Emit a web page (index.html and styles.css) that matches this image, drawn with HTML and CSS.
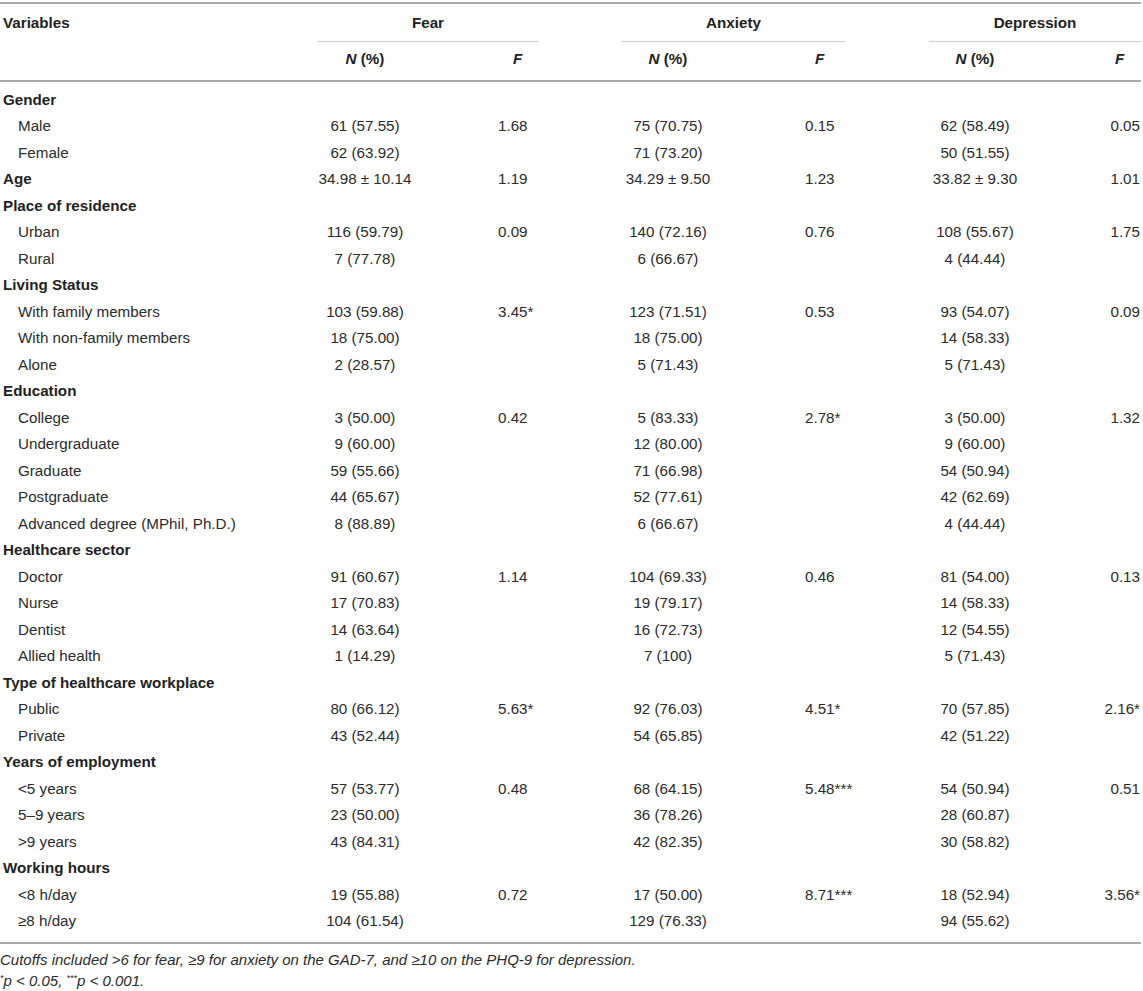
FILE: index.html
```html
<!DOCTYPE html>
<html lang="en">
<head>
<meta charset="utf-8">
<title>Table</title>
<link rel="stylesheet" href="styles.css">
</head>
<body>
<div class="wrap">
<table class="tbl">
  <colgroup>
    <col class="w-var">
    <col class="w-n1">
    <col class="w-f1">
    <col class="w-sp">
    <col class="w-n2">
    <col class="w-f2">
    <col class="w-sp">
    <col class="w-n3">
    <col class="w-f3">
  </colgroup>
  <thead>
    <tr class="h1">
      <th class="var">Variables</th>
      <th class="grp" colspan="2">Fear</th>
      <th class="sp"></th>
      <th class="grp" colspan="2">Anxiety</th>
      <th class="sp"></th>
      <th class="grp" colspan="2">Depression</th>
    </tr>
    <tr class="h2">
      <th class="var"></th>
      <th class="n"><i>N</i> (%)</th>
      <th class="f f1"><i>F</i></th>
      <th class="sp"></th>
      <th class="n"><i>N</i> (%)</th>
      <th class="f f2"><i>F</i></th>
      <th class="sp"></th>
      <th class="n"><i>N</i> (%)</th>
      <th class="f f3"><i>F</i></th>
    </tr>
  </thead>
  <tbody>
    <tr class="first"><td class="cat">Gender</td><td></td><td></td><td></td><td></td><td></td><td></td><td></td><td></td></tr>
    <tr><td class="sub">Male</td><td class="n">61 (57.55)</td><td class="f1">1.68</td><td></td><td class="n">75 (70.75)</td><td class="f2">0.15</td><td></td><td class="n">62 (58.49)</td><td class="f3">0.05</td></tr>
    <tr><td class="sub">Female</td><td class="n">62 (63.92)</td><td class="f1"></td><td></td><td class="n">71 (73.20)</td><td class="f2"></td><td></td><td class="n">50 (51.55)</td><td class="f3"></td></tr>
    <tr><td class="cat">Age</td><td class="n">34.98 ± 10.14</td><td class="f1">1.19</td><td></td><td class="n">34.29 ± 9.50</td><td class="f2">1.23</td><td></td><td class="n">33.82 ± 9.30</td><td class="f3">1.01</td></tr>
    <tr><td class="cat">Place of residence</td><td></td><td></td><td></td><td></td><td></td><td></td><td></td><td></td></tr>
    <tr><td class="sub">Urban</td><td class="n">116 (59.79)</td><td class="f1">0.09</td><td></td><td class="n">140 (72.16)</td><td class="f2">0.76</td><td></td><td class="n">108 (55.67)</td><td class="f3">1.75</td></tr>
    <tr><td class="sub">Rural</td><td class="n">7 (77.78)</td><td class="f1"></td><td></td><td class="n">6 (66.67)</td><td class="f2"></td><td></td><td class="n">4 (44.44)</td><td class="f3"></td></tr>
    <tr><td class="cat">Living Status</td><td></td><td></td><td></td><td></td><td></td><td></td><td></td><td></td></tr>
    <tr><td class="sub">With family members</td><td class="n">103 (59.88)</td><td class="f1">3.45*</td><td></td><td class="n">123 (71.51)</td><td class="f2">0.53</td><td></td><td class="n">93 (54.07)</td><td class="f3">0.09</td></tr>
    <tr><td class="sub">With non-family members</td><td class="n">18 (75.00)</td><td class="f1"></td><td></td><td class="n">18 (75.00)</td><td class="f2"></td><td></td><td class="n">14 (58.33)</td><td class="f3"></td></tr>
    <tr><td class="sub">Alone</td><td class="n">2 (28.57)</td><td class="f1"></td><td></td><td class="n">5 (71.43)</td><td class="f2"></td><td></td><td class="n">5 (71.43)</td><td class="f3"></td></tr>
    <tr><td class="cat">Education</td><td></td><td></td><td></td><td></td><td></td><td></td><td></td><td></td></tr>
    <tr><td class="sub">College</td><td class="n">3 (50.00)</td><td class="f1">0.42</td><td></td><td class="n">5 (83.33)</td><td class="f2">2.78*</td><td></td><td class="n">3 (50.00)</td><td class="f3">1.32</td></tr>
    <tr><td class="sub">Undergraduate</td><td class="n">9 (60.00)</td><td class="f1"></td><td></td><td class="n">12 (80.00)</td><td class="f2"></td><td></td><td class="n">9 (60.00)</td><td class="f3"></td></tr>
    <tr><td class="sub">Graduate</td><td class="n">59 (55.66)</td><td class="f1"></td><td></td><td class="n">71 (66.98)</td><td class="f2"></td><td></td><td class="n">54 (50.94)</td><td class="f3"></td></tr>
    <tr><td class="sub">Postgraduate</td><td class="n">44 (65.67)</td><td class="f1"></td><td></td><td class="n">52 (77.61)</td><td class="f2"></td><td></td><td class="n">42 (62.69)</td><td class="f3"></td></tr>
    <tr><td class="sub">Advanced degree (MPhil, Ph.D.)</td><td class="n">8 (88.89)</td><td class="f1"></td><td></td><td class="n">6 (66.67)</td><td class="f2"></td><td></td><td class="n">4 (44.44)</td><td class="f3"></td></tr>
    <tr><td class="cat">Healthcare sector</td><td></td><td></td><td></td><td></td><td></td><td></td><td></td><td></td></tr>
    <tr><td class="sub">Doctor</td><td class="n">91 (60.67)</td><td class="f1">1.14</td><td></td><td class="n">104 (69.33)</td><td class="f2">0.46</td><td></td><td class="n">81 (54.00)</td><td class="f3">0.13</td></tr>
    <tr><td class="sub">Nurse</td><td class="n">17 (70.83)</td><td class="f1"></td><td></td><td class="n">19 (79.17)</td><td class="f2"></td><td></td><td class="n">14 (58.33)</td><td class="f3"></td></tr>
    <tr><td class="sub">Dentist</td><td class="n">14 (63.64)</td><td class="f1"></td><td></td><td class="n">16 (72.73)</td><td class="f2"></td><td></td><td class="n">12 (54.55)</td><td class="f3"></td></tr>
    <tr><td class="sub">Allied health</td><td class="n">1 (14.29)</td><td class="f1"></td><td></td><td class="n">7 (100)</td><td class="f2"></td><td></td><td class="n">5 (71.43)</td><td class="f3"></td></tr>
    <tr><td class="cat">Type of healthcare workplace</td><td></td><td></td><td></td><td></td><td></td><td></td><td></td><td></td></tr>
    <tr><td class="sub">Public</td><td class="n">80 (66.12)</td><td class="f1">5.63*</td><td></td><td class="n">92 (76.03)</td><td class="f2">4.51*</td><td></td><td class="n">70 (57.85)</td><td class="f3">2.16*</td></tr>
    <tr><td class="sub">Private</td><td class="n">43 (52.44)</td><td class="f1"></td><td></td><td class="n">54 (65.85)</td><td class="f2"></td><td></td><td class="n">42 (51.22)</td><td class="f3"></td></tr>
    <tr><td class="cat">Years of employment</td><td></td><td></td><td></td><td></td><td></td><td></td><td></td><td></td></tr>
    <tr><td class="sub">&lt;5 years</td><td class="n">57 (53.77)</td><td class="f1">0.48</td><td></td><td class="n">68 (64.15)</td><td class="f2">5.48***</td><td></td><td class="n">54 (50.94)</td><td class="f3">0.51</td></tr>
    <tr><td class="sub">5–9 years</td><td class="n">23 (50.00)</td><td class="f1"></td><td></td><td class="n">36 (78.26)</td><td class="f2"></td><td></td><td class="n">28 (60.87)</td><td class="f3"></td></tr>
    <tr><td class="sub">&gt;9 years</td><td class="n">43 (84.31)</td><td class="f1"></td><td></td><td class="n">42 (82.35)</td><td class="f2"></td><td></td><td class="n">30 (58.82)</td><td class="f3"></td></tr>
    <tr><td class="cat">Working hours</td><td></td><td></td><td></td><td></td><td></td><td></td><td></td><td></td></tr>
    <tr><td class="sub">&lt;8 h/day</td><td class="n">19 (55.88)</td><td class="f1">0.72</td><td></td><td class="n">17 (50.00)</td><td class="f2">8.71***</td><td></td><td class="n">18 (52.94)</td><td class="f3">3.56*</td></tr>
    <tr class="last"><td class="sub">≥8 h/day</td><td class="n">104 (61.54)</td><td class="f1"></td><td></td><td class="n">129 (76.33)</td><td class="f2"></td><td></td><td class="n">94 (55.62)</td><td class="f3"></td></tr>
  </tbody>
</table>
<div class="notes">
  <p class="note">Cutoffs included &gt;6 for fear, ≥9 for anxiety on the GAD-7, and ≥10 on the PHQ-9 for depression.</p>
  <p class="note"><sup>*</sup>p &lt; 0.05, <sup>***</sup>p &lt; 0.001.</p>
</div>
</div>
</body>
</html>
```
FILE: styles.css
```css
html, body {
  margin: 0;
  padding: 0;
  background: #fff;
}
body {
  font-family: "Liberation Sans", Arial, sans-serif;
  color: #2b2b2b;
  padding-top: 2px;
}
.wrap {
  width: 1141px;
}
.tbl {
  width: 1141px;
  border-collapse: collapse;
  table-layout: fixed;
  font-size: 15.2px;
  line-height: 18px;
}
.w-var { width: 318px; }
.w-n1 { width: 94px; }
.w-f1 { width: 126px; }
.w-sp { width: 84px; }
.w-n2 { width: 92px; }
.w-f2 { width: 131px; }
.w-n3 { width: 92px; }
.w-f3 { width: 120px; }

.tbl tr.h1 th {
  border-top: 2px solid #ababab;
  height: 37px;
  vertical-align: middle;
}
.tbl th {
  font-weight: bold;
  color: #222;
  padding: 0;
  white-space: nowrap;
}
.tbl th i { font-style: italic; }
.tbl tr.h1 th.grp {
  text-align: center;
  border-bottom: 1px solid #cfcfcf;
}
.tbl tr.h1 th.var {
  text-align: left;
  padding-left: 3px;
}
.tbl tr.h2 th {
  height: 39px;
  border-bottom: 2px solid #ababab;
  vertical-align: top;
  padding-top: 8px;
  box-sizing: border-box;
}
.tbl th.n { text-align: center; }
.tbl th.f { text-align: left; }
.tbl tr.h2 th.f1 { padding-left: 101px; }
.tbl tr.h2 th.f2 { padding-left: 101px; }
.tbl tr.h2 th.f3 { padding-left: 94px; }

.tbl td {
  padding: 4px 0 4.5px;
  white-space: nowrap;
  vertical-align: middle;
}
.tbl td.cat {
  font-weight: bold;
  color: #222;
  padding-left: 3px;
}
.tbl td.sub { padding-left: 18px; }
.tbl td.n { text-align: center; }
.tbl td.f1 { padding-left: 86px; }
.tbl td.f2 { padding-left: 91px; }
.tbl td.f3 { text-align: right; padding-right: 1px; }

.tbl tr.first td { padding-top: 9px; }
.tbl tr.last td {
  padding-bottom: 12px;
  border-bottom: 2px solid #ababab;
}

.notes {
  padding-top: 5px;
}
.note {
  margin: 0;
  font-style: italic;
  font-size: 15px;
  line-height: 21px;
  color: #2b2b2b;
}
.note sup {
  font-size: 9px;
  vertical-align: 5px;
  line-height: 0;
}
```
